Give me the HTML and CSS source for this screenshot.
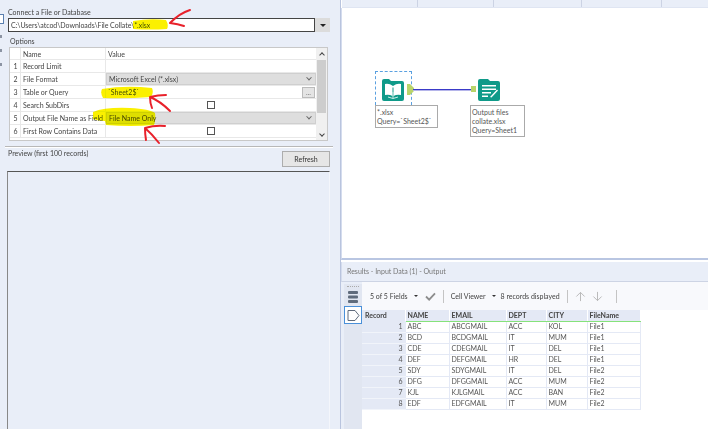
FILE: index.html
```html
<!DOCTYPE html>
<html>
<head>
<meta charset="utf-8">
<title>Input Data</title>
<link rel="stylesheet" href="styles.css">
</head>
<body>
<div class="app">
  <aside class="left">
    <div class="strip"><span class="tool-tab"></span><i class="dot"></i><i class="dot"></i><i class="dot"></i></div>
    <div class="config">
      <div class="label connect-label">Connect a File or Database</div>
      <div class="connect">
        <div class="path">C:\Users\atcod\Downloads\File Collate\*.xlsx</div>
        <div class="drop"><span class="tri"></span></div>
      </div>
      <div class="label options-label">Options</div>
      <div class="options">
        <div class="grid">
          <div class="row head"><div class="n"></div><div class="k">Name</div><div class="v">Value</div></div>
          <div class="row"><div class="n">1</div><div class="k">Record Limit</div><div class="v"></div></div>
          <div class="row"><div class="n">2</div><div class="k">File Format</div><div class="v sel"><span>Microsoft Excel (*.xlsx)</span><i class="chev"></i></div></div>
          <div class="row"><div class="n">3</div><div class="k">Table or Query</div><div class="v txt"><span>`Sheet2$`</span><b class="more">...</b></div></div>
          <div class="row"><div class="n">4</div><div class="k">Search SubDirs</div><div class="v chk"><i class="box"></i></div></div>
          <div class="row"><div class="n">5</div><div class="k">Output File Name as Field</div><div class="v sel"><span>File Name Only</span><i class="chev"></i></div></div>
          <div class="row"><div class="n">6</div><div class="k">First Row Contains Data</div><div class="v chk"><i class="box"></i></div></div>
        </div>
        <div class="scroll"><span class="up"></span><span class="thumb"></span><span class="down"></span></div>
      </div>
      <div class="preview-bar">
        <div class="preview-label">Preview (first 100 records)</div>
        <div class="refresh">Refresh</div>
      </div>
      <div class="preview-box"></div>
    </div>
    <svg class="marks" width="340" height="170" viewBox="0 0 340 170">
      <g class="hl">
        <path d="M133 21 Q150 18 166 20 Q169 25 167 29 Q150 30 133 29 Z"/>
        <path d="M102 89 Q125 85 152 88 Q154 93 151 97 Q125 99 103 98 Q100 93 102 89 Z"/>
        <path d="M93 112 Q105 107 130 108 Q150 109 155 113 Q156 120 154 125 Q130 127 106 125 L105 121 Q98 121 93 119 Z"/>
      </g>
      <g class="arrow">
        <path d="M190 10 Q180 13 170 23 Q178 24 184 26"/>
        <path d="M166 95 Q158 95 150 97 Q160 101 170 111 M150 97 Q150 103 152 108"/>
        <path d="M165 126 Q155 125 145 128 Q152 134 159 143 M145 128 Q145 134 146 140"/>
      </g>
    </svg>
  </aside>
  <main class="right">
    <div class="col-head"><span class="c1"></span><span class="c2"></span><span class="c3"></span><span class="c4"></span><span class="c5"></span></div>
    <section class="canvas">
      <div class="node n-in">
        <div class="sel-frame"></div>
        <svg class="ico" width="22" height="22" viewBox="0 0 22 22">
          <path class="teal" d="M0 2 Q0 0 2 0 H7 L9 2 H20 Q22 2 22 4 V20 Q22 22 20 22 H2 Q0 22 0 20 Z"/>
          <path class="wht" d="M3 5 Q7 4 11 7 Q15 4 19 5 V16 Q15 15 11.5 17 V8.5 H10.5 V17 Q7 15 3 16 Z"/>
          <path class="line" d="M11 13 V19 M6 18 L11 19.5 L16 18"/>
        </svg>
        <svg class="port-out" width="7" height="11" viewBox="0 0 7 11"><path d="M0 0 H3 L7 4 V7 L3 11 H0 Z"/></svg>
      </div>
      <div class="wire"></div>
      <div class="port-in"></div>
      <div class="node n-out">
        <svg class="ico" width="22" height="22" viewBox="0 0 22 22">
          <path class="teal" d="M0 2 Q0 0 2 0 H10 L12 2 H20 Q22 2 22 4 V20 Q22 22 20 22 H2 Q0 22 0 20 Z"/>
          <path class="wht" d="M4 6 H18 V7.5 H4 Z M4 9.5 H18 V11 H4 Z M4 13 H13 V14.5 H4 Z M4 16.5 H10 V18 H4 Z M12 18 L19 10.5 L20 11.5 L13.5 18.5 Z"/>
        </svg>
      </div>
      <div class="note note-in">*.xlsx<br>Query=`Sheet2$`</div>
      <div class="note note-out">Output files<br>collate.xlsx<br>Query=Sheet1</div>
    </section>
    <div class="results-title">Results - Input Data (1) - Output</div>
    <section class="results">
      <div class="side">
        <div class="grip"></div>
        <svg class="side-ico" width="12" height="14" viewBox="0 0 12 14"><rect x="1" y="1" width="10" height="3" rx="1"/><rect x="1" y="5.5" width="10" height="3" rx="1"/><rect x="1" y="10" width="10" height="3" rx="1"/></svg>
        <div class="side-act"><svg width="13" height="11" viewBox="0 0 13 11"><path d="M1 .5 H8 L12 5.5 L8 10.5 H1 Z"/></svg></div>
      </div>
      <div class="res-main">
        <div class="toolbar">
          <span class="t">5 of 5 Fields</span><i class="caret"></i>
          <svg class="check" width="11" height="9" viewBox="0 0 12 10"><path d="M1 5 L4.5 8.5 L11 1.5"/></svg>
          <span class="sep"></span>
          <span class="t">Cell Viewer</span><i class="caret"></i>
          <span class="t">8 records displayed</span>
          <span class="sep"></span>
          <svg class="ar" width="11" height="11" viewBox="0 0 12 12"><path d="M6 11 V1.5 M1.5 6 L6 1.5 L10.5 6"/></svg>
          <svg class="ar" width="11" height="11" viewBox="0 0 12 12"><path d="M6 1 V10.5 M1.5 6 L6 10.5 L10.5 6"/></svg>
          <span class="sep"></span>
        </div>
        <table class="data">
          <thead><tr><th class="rec">Record</th><th>NAME</th><th>EMAIL</th><th>DEPT</th><th>CITY</th><th>FileName</th></tr></thead>
          <tbody>
            <tr><td class="rec">1</td><td>ABC</td><td>ABCGMAIL</td><td>ACC</td><td>KOL</td><td>File1</td></tr>
            <tr><td class="rec">2</td><td>BCD</td><td>BCDGMAIL</td><td>IT</td><td>MUM</td><td>File1</td></tr>
            <tr><td class="rec">3</td><td>CDE</td><td>CDEGMAIL</td><td>IT</td><td>DEL</td><td>File1</td></tr>
            <tr><td class="rec">4</td><td>DEF</td><td>DEFGMAIL</td><td>HR</td><td>DEL</td><td>File1</td></tr>
            <tr><td class="rec">5</td><td>SDY</td><td>SDYGMAIL</td><td>IT</td><td>DEL</td><td>File2</td></tr>
            <tr><td class="rec">6</td><td>DFG</td><td>DFGGMAIL</td><td>ACC</td><td>MUM</td><td>File2</td></tr>
            <tr><td class="rec">7</td><td>KJL</td><td>KJLGMAIL</td><td>ACC</td><td>BAN</td><td>File2</td></tr>
            <tr><td class="rec">8</td><td>EDF</td><td>EDFGMAIL</td><td>IT</td><td>MUM</td><td>File2</td></tr>
          </tbody>
        </table>
      </div>
    </section>
  </main>
</div>
</body>
</html>
```
FILE: styles.css
```css
* { box-sizing: border-box; }
html, body { margin: 0; padding: 0; }
body { width: 708px; height: 429px; overflow: hidden; font-family: Lato, "Liberation Sans", Arial, sans-serif; font-size: 7px; color: #333; background: #fff; }
.app { display: flex; width: 708px; height: 429px; filter: blur(0.3px); }

.left { position: relative; width: 341px; display: flex; background: #e9eef8; border-right: 1px solid #b9c4de; }
.strip { width: 6px; padding-top: 14px; display: flex; flex-direction: column; gap: 11px; }
.tool-tab { display: block; width: 4px; height: 10px; background: #fff; border: 1px solid #5a7fb0; border-left: 0; }
.dot { display: block; width: 2px; height: 3px; background: #8c94a3; }
.config { flex: 1; padding: 7px 0 0 2px; display: flex; flex-direction: column; min-width: 0; }
.label { font-size: 7px; color: #444; line-height: 10px; }
.connect { display: flex; height: 14px; margin-top: 1px; width: 322px; }
.path { flex: 1; border: 1px solid #444; background: #fff; padding-left: 2px; line-height: 12px; font-size: 7px; letter-spacing: -0.04px; color: #444; white-space: nowrap; }
.drop { width: 15px; background: #dcdcdc; display: flex; align-items: center; justify-content: center; }
.tri { border-left: 3px solid transparent; border-right: 3px solid transparent; border-top: 3px solid #222; }
.options-label { margin-top: 4px; margin-left: 2px; }
.options { display: flex; width: 319px; height: 94px; margin-top: 1px; margin-left: 1px; background: #fff; border: 1px solid #c8c8c8; }
.grid { flex: 1; min-width: 0; }
.row { display: flex; height: 13px; border-bottom: 1px solid #e8e8e8; font-size: 7px; line-height: 12px; color: #444; }
.row.head { height: 12px; }
.n { width: 11px; text-align: center; border-right: 1px solid #e8e8e8; background: #fff; padding-left: 1px; }
.k { width: 85px; padding-left: 2px; border-right: 1px solid #e8e8e8; white-space: nowrap; }
.v { flex: 1; padding-left: 2px; position: relative; display: flex; align-items: center; }
.sel { background: #dedede; border: 1px solid #cfcfcf; justify-content: space-between; padding-right: 4px; }
.chev { width: 4px; height: 4px; border-right: 1px solid #666; border-bottom: 1px solid #666; transform: rotate(45deg) translate(-1px, -1px); }
.txt { justify-content: space-between; padding-right: 1px; }
.more { width: 13px; height: 11px; background: #e4e4e4; border: 1px solid #bbb; font-weight: normal; text-align: center; line-height: 8px; font-size: 7px; color: #777; }
.chk { justify-content: center; padding-left: 0; }
.box { width: 8px; height: 8px; border: 1px solid #555; background: #fff; }
.scroll { width: 11px; background: #f0f0f0; display: flex; flex-direction: column; align-items: center; }
.up, .down { width: 4px; height: 4px; border-left: 1px solid #444; border-top: 1px solid #444; transform: rotate(45deg); margin: 5px 0 2px; flex: none; }
.down { transform: rotate(225deg); margin: auto 0 4px; }
.thumb { width: 9px; height: 53px; background: #cdcdcd; margin-top: 1px; flex: none; }
.preview-bar { margin-top: 5px; margin-left: -3px; width: 328px; border-top: 1px solid #b8b8b8; box-shadow: inset 0 1px 0 #fff; display: flex; justify-content: space-between; height: 25px; padding: 2px 3px 0 3px; }
.preview-label { font-size: 7px; line-height: 9px; color: #444; }
.refresh { width: 48px; height: 16px; margin-top: 2px; background: #e6e6e6; border: 1px solid #adadad; text-align: center; line-height: 14px; font-size: 7px; color: #333; }
.preview-box { flex: 1; margin-left: -1px; width: 323px; border-top: 1px solid #555; border-left: 1px solid #888; border-right: 1px solid #f4f6fb; background: #e9eef8; }

.marks { position: absolute; left: 0; top: 0; pointer-events: none; }
.hl path { fill: #fbf000; mix-blend-mode: darken; }
.arrow path { fill: none; stroke: #e8212b; stroke-width: 2; stroke-linecap: round; stroke-linejoin: round; }

.right { flex: 1; display: flex; flex-direction: column; min-width: 0; }
.col-head { height: 8px; display: flex; background: #e9eef8; border-bottom: 1px solid #dfe5f2; margin-left: 1px; flex: none; }
.col-head span { display: block; border-right: 1px solid #ccd3e4; height: 7px; }
.c1 { width: 76px; } .c2 { width: 76px; } .c3 { width: 88px; } .c4 { width: 80px; } .c5 { flex: 1; border-right: 0 !important; }
.canvas { position: relative; height: 252px; flex: none; background: #fff; border-left: 1px solid #d4dcee; border-bottom: 2px solid #b9c6e2; }
.node { position: absolute; width: 22px; height: 22px; }
.n-in { left: 40px; top: 71px; }
.n-out { left: 136px; top: 71px; }
.sel-frame { position: absolute; left: -7px; top: -8px; width: 37px; height: 34px; border: 1px dashed #5aa0e0; border-bottom: 0; }
.ico { display: block; }
.teal { fill: #0f9a89; }
.wht { fill: #fff; }
.line { fill: none; stroke: #cdeee8; stroke-width: 1; }
.port-out { position: absolute; left: 25px; top: 5px; }
.port-out path { fill: #b9d46a; }
.port-in { position: absolute; left: 129px; top: 78px; width: 5px; height: 6px; background: #b9d46a; }
.wire { position: absolute; left: 71px; top: 81px; width: 59px; height: 1px; background: #3a3ac8; box-shadow: 0 1px 0 #b5b5ea; }
.note { position: absolute; background: #fff; border: 1px solid #aaa; font-size: 7px; line-height: 9px; color: #555; padding: 2px 1px 0 1px; white-space: nowrap; }
.note-in { left: 33px; top: 97px; width: 63px; height: 23px; }
.note-out { left: 128px; top: 97px; width: 55px; height: 32px; }

.results-title { height: 20px; flex: none; margin-top: 2px; background: #e9eef8; border-bottom: 1px solid #cdd4e4; border-left: 1px solid #d4dcee; padding: 5px 0 0 5px; font-size: 7px; line-height: 9px; color: #777; }
.results { flex: 1; display: flex; min-height: 0; background: #e9eef8; }
.side { width: 18px; margin: 2px 0 0 3px; padding-top: 2px; background: #e1e6f1; display: flex; flex-direction: column; align-items: center; flex: none; }
.grip { width: 12px; border-top: 1px dotted #aaa; margin-bottom: 3px; }
.side-ico { fill: #5f6b7c; }
.side-act { margin-top: 2px; width: 18px; height: 18px; border: 1px solid #4a90d9; background: #fff; display: flex; align-items: center; justify-content: center; }
.side-act path { fill: none; stroke: #5f6b7c; stroke-width: 1; }
.res-main { flex: 1; min-width: 0; background: #fff; }
.toolbar { height: 28px; display: flex; align-items: center; padding: 0 0 0 8px; background: #f8f9fc; font-size: 7px; color: #444; white-space: nowrap; }
.t { line-height: 10px; }
.caret { border-left: 2px solid transparent; border-right: 2px solid transparent; border-top: 2px solid #333; margin: 0 5px 0 6px; }
.check { margin-left: 2px; }
.check path { fill: none; stroke: #8d8d8d; stroke-width: 2; }
.sep { width: 1px; height: 13px; background: #c4c4c4; margin: 0 7px; }
.ar { margin-right: 6px; }
.ar path { fill: none; stroke: #b5b5b5; stroke-width: 1; }
.data { border-collapse: collapse; table-layout: fixed; width: 279px; font-size: 7px; color: #555; background: #fff; }
.data th { height: 11px; background: #e4e9f5; font-weight: bold; text-align: left; padding: 0 0 0 2px; line-height: 9px; border-right: 1px solid #fff; border-bottom: 1px solid #86e27b; color: #444; }
.data th.rec { border-bottom-color: #e4e9f5; width: 43px; padding-left: 3px; }
.data th:nth-child(2) { width: 44px; }
.data th:nth-child(3) { width: 57px; }
.data th:nth-child(4) { width: 40px; }
.data th:nth-child(5) { width: 41px; }
.data td { height: 11px; padding: 0 0 0 2px; line-height: 9px; border-right: 1px solid #e4e9f5; border-bottom: 1px solid #e4e9f5; white-space: nowrap; }
.data td.rec { background: #e4e9f5; text-align: right; padding: 0 2px 0 0; border-bottom-color: #f1f4fa; color: #555; }
```
